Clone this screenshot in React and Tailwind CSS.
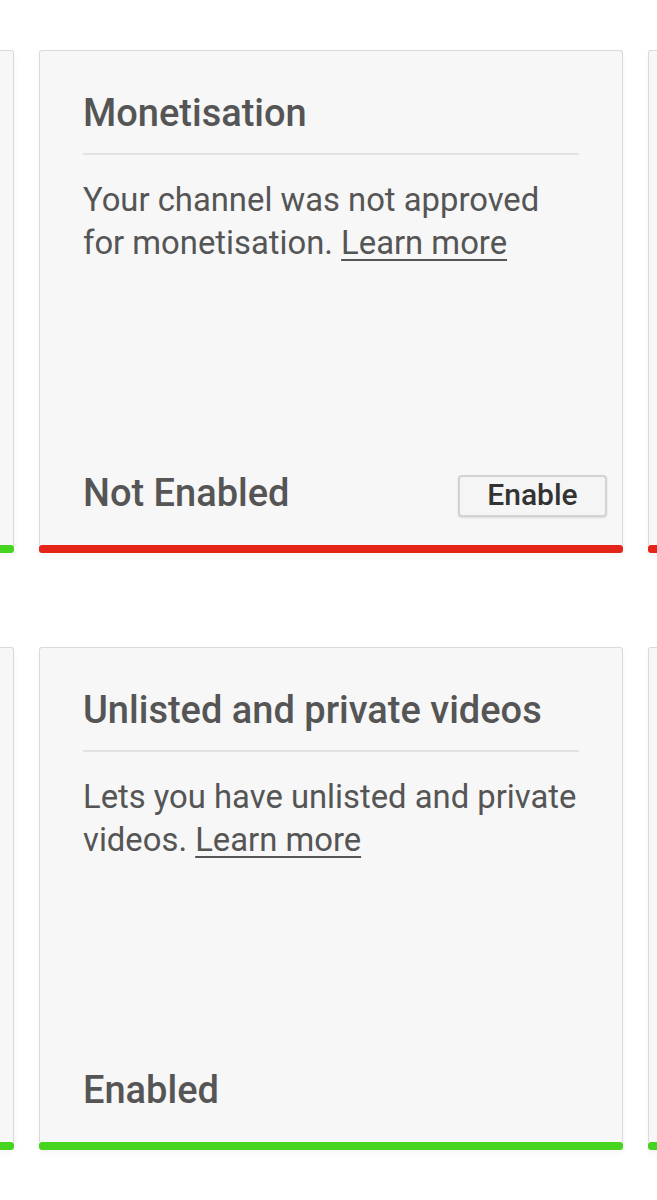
import React from "react";

function Card({ title, body, link, status, bar, button, empty }) {
  return (
    <div className="flex h-[503px] w-[584px] shrink-0 flex-col shadow-[0_3px_6px_rgba(0,0,0,0.04)]">
      <div className="flex flex-1 flex-col rounded-t-[3px] border-x border-t border-[#dadada] bg-[#f7f7f7] px-[43px]">
        {!empty && (
          <>
            <div className="whitespace-nowrap pt-[40px] text-[38px] font-medium leading-[44px] text-[#555555]">
              {title}
            </div>
            <div className="mt-[18px] h-[2px] bg-[#e2e2e2]" />
            <div className="mt-[24px] whitespace-nowrap text-[32.8px] leading-[43px] text-[#555555]">
              {body[0]}
              <br />
              {body[1]}{" "}
              <span className="underline decoration-2 underline-offset-[5px]">{link}</span>
            </div>
            <div className="mt-auto mb-[28px] flex h-[42px] items-center justify-between">
              <div className="mb-[6px] whitespace-nowrap text-[38px] font-medium leading-[44px] text-[#555555]">
                {status}
              </div>
              {button && (
                <button className="mr-[-28px] flex h-[42px] w-[149px] items-center justify-center rounded-[4px] border-2 border-[#d3d3d3] bg-[#f5f5f5] pb-[3px] text-[30px] font-medium leading-none text-[#333333] shadow-[0_1px_2px_rgba(0,0,0,0.12)]">
                  {button}
                </button>
              )}
            </div>
          </>
        )}
      </div>
      <div className={"h-[8px] rounded-[3px] " + (bar === "red" ? "bg-[#e5241a]" : "bg-[#46d41e]")} />
    </div>
  );
}

export default function App() {
  return (
    <div className="min-h-[1200px] w-full overflow-hidden bg-white pt-[50px] font-['Roboto','Liberation_Sans',sans-serif]">
      <div className="ml-[-570px] flex gap-[25px]">
        <Card empty bar="green" />
        <Card
          title="Monetisation"
          body={["Your channel was not approved", "for monetisation."]}
          link="Learn more"
          status="Not Enabled"
          button="Enable"
          bar="red"
        />
        <Card empty bar="red" />
      </div>
      <div className="ml-[-570px] mt-[94px] flex gap-[25px]">
        <Card empty bar="green" />
        <Card
          title="Unlisted and private videos"
          body={["Lets you have unlisted and private", "videos."]}
          link="Learn more"
          status="Enabled"
          bar="green"
        />
        <Card empty bar="green" />
      </div>
    </div>
  );
}
